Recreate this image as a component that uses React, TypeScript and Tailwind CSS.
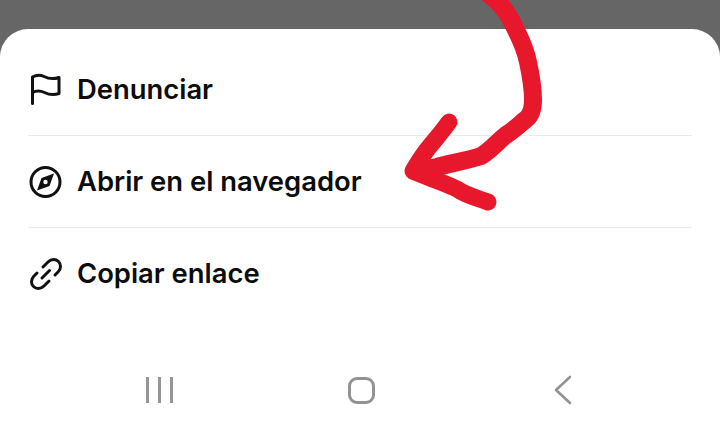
import type { ReactNode } from "react";

const FlagIcon = () => (
  <svg width="36" height="36" viewBox="0 0 36 36" fill="none" stroke="#111" strokeWidth="3" strokeLinecap="round" strokeLinejoin="round">
    <path d="M4.5 31.5V5C8 3 12 2.5 16 4.5C20 6.5 25 7.5 31 5.5V21.5C25 23.5 20.5 22.5 16.5 20.5C12.5 18.5 8 18.5 4.5 20.5" />
  </svg>
);

const CompassIcon = () => (
  <svg width="36" height="36" viewBox="0 0 36 36" fill="none">
    <circle cx="17.5" cy="18" r="14.5" stroke="#111" strokeWidth="3" />
    <path fillRule="evenodd" clipRule="evenodd" d="M26 9.5L21.5 22L9 26.5L13.5 14L26 9.5ZM17.5 15.8A2.2 2.2 0 1 0 17.5 20.2A2.2 2.2 0 1 0 17.5 15.8Z" fill="#111" />
  </svg>
);

const LinkIcon = () => (
  <svg width="36" height="36" viewBox="0 0 36 36" fill="none" stroke="#111" strokeWidth="3" strokeLinecap="round" strokeLinejoin="round">
    <path d="M15 11L20 6C23.5 2.5 28 3 30.5 5.5C33 8 33.5 12.5 30 16L27 19" />
    <path d="M21 25L16 30C12.5 33.5 8 33 5.5 30.5C3 28 2.5 23.5 6 20L9 17" />
    <path d="M21.5 14.5L14 22" />
  </svg>
);

function MenuRow({ icon, label, divider }: { icon: ReactNode; label: string; divider?: boolean }) {
  return (
    <div className={divider ? "flex h-[92px] items-center gap-[13px] border-b border-[#e9e9e9]" : "flex h-[92px] items-center gap-[13px]"}>
      <span className="flex h-[36px] w-[36px] shrink-0 items-center justify-center">{icon}</span>
      <span className="text-[27.4px] font-semibold leading-none text-[#0c0c0c]">{label}</span>
    </div>
  );
}

export default function App() {
  return (
    <div className="relative h-[431px] w-[720px] overflow-hidden bg-[#666666] font-['Inter',sans-serif]">
      <div className="h-[29px]" />

      {/* Bottom sheet */}
      <div className="h-[402px] rounded-t-[28px] bg-white">
        <div className="px-[28px] pt-[15px]">
          <MenuRow icon={<FlagIcon />} label="Denunciar" divider />
          <MenuRow icon={<CompassIcon />} label="Abrir en el navegador" divider />
          <MenuRow icon={<LinkIcon />} label="Copiar enlace" />
        </div>

        {/* Android nav bar */}
        <div className="mt-[48px] grid h-[44px] grid-cols-3 pl-[59px] pr-[56px]">
          <div className="flex items-center justify-center gap-[9px]">
            <span className="h-[26px] w-[3px] bg-[#969696]" />
            <span className="h-[26px] w-[3px] bg-[#969696]" />
            <span className="h-[26px] w-[3px] bg-[#969696]" />
          </div>
          <div className="flex items-center justify-center">
            <span className="h-[27px] w-[27px] rounded-[9px] border-[3px] border-[#939393]" />
          </div>
          <div className="flex items-center justify-center">
            <svg width="18" height="30" viewBox="0 0 18 30" fill="none" stroke="#939393" strokeWidth="2.6" strokeLinecap="round" strokeLinejoin="round">
              <path d="M16 2L2 15L16 28" />
            </svg>
          </div>
        </div>
      </div>

      {/* Hand-drawn red arrow on top of the screenshot */}
      <svg className="absolute left-0 top-0" width="720" height="431" viewBox="0 0 720 431" fill="none" stroke="#e8182c" strokeLinecap="round" strokeLinejoin="round">
        <path strokeWidth="18" d="M486 -8C498 0 509 14 516 30C522 42 526 52 528 62C531 76 533 88 533 100C533 110 531 116 525 120C519 125 514 130 506 135C497 142 491 150 481 156C466 161 451 163 437 167C428 169 420 170 414 171" />
        <path strokeWidth="17" d="M449 122C442 132 433 142 426 151C421 158 417 164 413 171C425 177 441 181 457 189C467 196 478 198 488 202" />
      </svg>
    </div>
  );
}
